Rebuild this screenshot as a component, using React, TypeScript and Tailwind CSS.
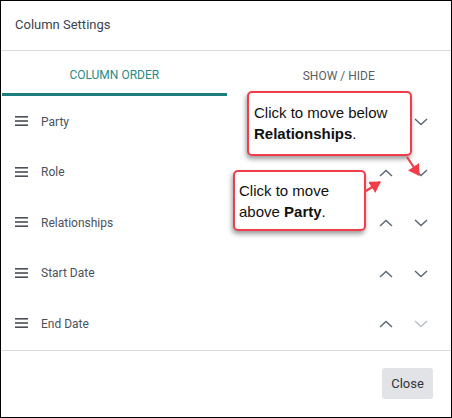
import React from "react";

function Hamburger() {
  return (
    <svg width="13" height="12" viewBox="0 0 13 12" className="shrink-0">
      <rect x="0" y="1" width="13" height="1.6" fill="#4b4f57" />
      <rect x="0" y="5.2" width="13" height="1.6" fill="#4b4f57" />
      <rect x="0" y="9.4" width="13" height="1.6" fill="#4b4f57" />
    </svg>
  );
}

function Chevron({ up, disabled, hidden }: { up?: boolean; disabled?: boolean; hidden?: boolean }) {
  return (
    <svg width="14" height="8" viewBox="0 0 14 8" className={hidden ? "invisible" : ""}>
      <polyline
        points={up ? "1,7 7,1.5 13,7" : "1,1 7,6.5 13,1"}
        fill="none"
        stroke={disabled ? "#b9bec4" : "#5b6876"}
        strokeWidth="1.5"
      />
    </svg>
  );
}

const rows = [
  { label: "Party", upHidden: true },
  { label: "Role" },
  { label: "Relationships" },
  { label: "Start Date" },
  { label: "End Date", downDisabled: true },
];

export default function App() {
  return (
    <div
      className="relative w-[452px] h-[418px] border border-black bg-white flex flex-col overflow-hidden"
      style={{ fontFamily: "Roboto, 'Liberation Sans', sans-serif" }}
    >
      <div className="h-[50px] flex items-center pl-[14px] pb-[2px] text-[13px] text-[#3b4350] border-b border-[#dcdcdc] shrink-0">
        Column Settings
      </div>
      <div className="flex h-[45px] shrink-0 pl-px">
        <div className="flex-1 flex items-center justify-center text-[12px] text-[#2a8a86] border-b-[3px] border-[#1d7f7b] pt-[6px]">
          COLUMN ORDER
        </div>
        <div className="flex-1 flex items-center justify-center text-[12px] text-[#5a5e64] pt-[5px]">
          SHOW / HIDE
        </div>
      </div>
      <div className="flex flex-col">
        {rows.map((r) => (
          <div key={r.label} className="h-[50.5px] flex items-center pl-[14px] pr-[23px]">
            <Hamburger />
            <span className="ml-[13px] text-[12px] text-[#4a515c] flex-1 pt-[1px]">{r.label}</span>
            <div className="flex items-center gap-[21px] pt-[2px]">
              <Chevron up hidden={r.upHidden} />
              <Chevron disabled={r.downDisabled} />
            </div>
          </div>
        ))}
      </div>
      <div className="mt-auto border-t border-[#dcdcdc] h-[67px] flex items-center justify-end pr-[18px]">
        <button className="w-[51px] h-[31px] rounded-[3px] bg-[#e1e3e7] text-[13px] text-[#2f3338] mt-[-1px]">
          Close
        </button>
      </div>

      {/* Callout 1 */}
      <div
        className="absolute left-[246px] top-[90px] w-[165px] h-[65px] border-2 border-[#ef3e49] rounded-[5px] bg-white shadow-[-1px_3px_5px_rgba(0,0,0,0.4)] pl-[5px] pt-[9px] text-[15px] leading-[21px] text-[#111]"
        style={{ fontFamily: "'Liberation Sans', Arial, sans-serif" }}
      >
        Click to move below
        <br />
        <b>Relationships</b>.
      </div>

      {/* Callout 2 */}
      <div
        className="absolute left-[232px] top-[169px] w-[133px] h-[61px] border-2 border-[#ef3e49] rounded-[5px] bg-white shadow-[-1px_3px_5px_rgba(0,0,0,0.4)] pl-[4px] pt-[8px] text-[15px] leading-[21px] text-[#111]"
        style={{ fontFamily: "'Liberation Sans', Arial, sans-serif" }}
      >
        Click to move
        <br />
        above <b>Party</b>.
      </div>

      {/* Arrows */}
      <svg className="absolute left-0 top-0 pointer-events-none" width="452" height="418" viewBox="0 0 452 418">
        <defs>
          <marker id="ah" markerWidth="6" markerHeight="6" refX="4.5" refY="3" orient="auto" markerUnits="strokeWidth">
            <path d="M0,0 L5,3 L0,6 Z" fill="#ef3e49" />
          </marker>
        </defs>
        <line x1="406" y1="156" x2="418" y2="174" stroke="#ef3e49" strokeWidth="2.2" markerEnd="url(#ah)" />
        <line x1="365" y1="190" x2="379" y2="181" stroke="#ef3e49" strokeWidth="2.2" markerEnd="url(#ah)" />
      </svg>
    </div>
  );
}
